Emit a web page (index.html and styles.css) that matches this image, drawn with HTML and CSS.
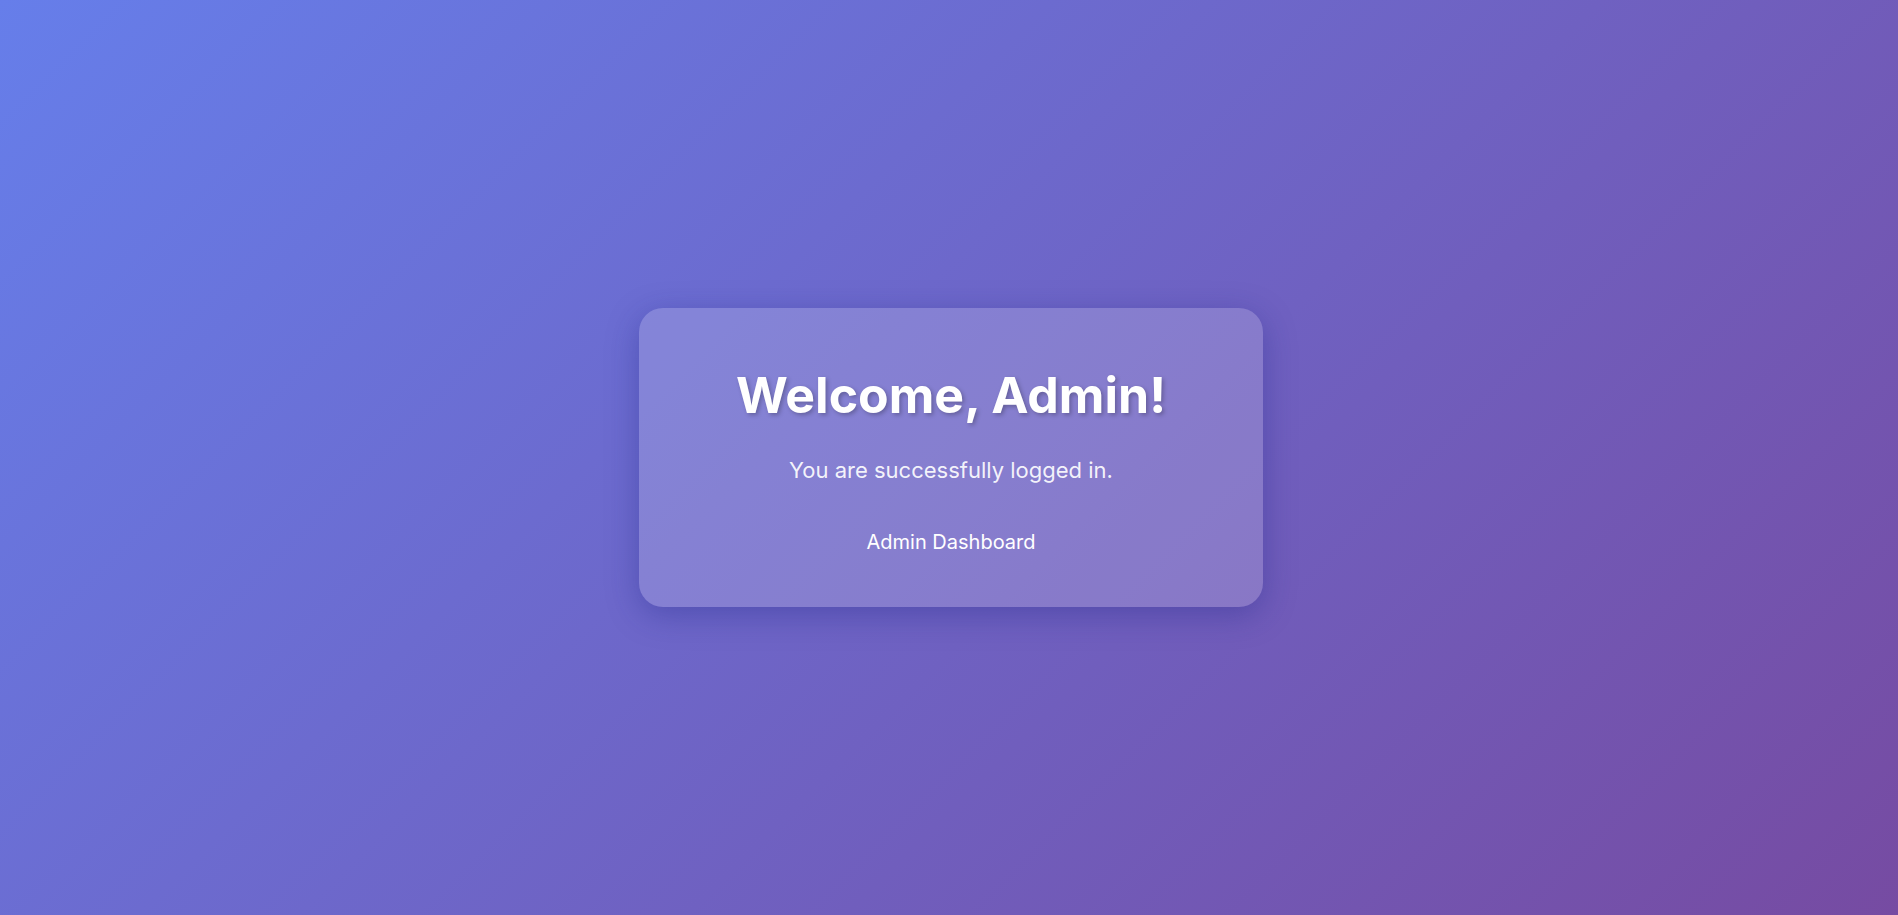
FILE: index.html
```html
<!DOCTYPE html>
<html lang="en">
<head>
<meta charset="utf-8">
<title>Welcome</title>
<link rel="stylesheet" href="styles.css">
</head>
<body>
<main class="page">
  <section class="card">
    <h1 class="title">Welcome, Admin!</h1>
    <p class="subtitle">You are successfully logged in.</p>
    <a class="link" href="#">Admin Dashboard</a>
  </section>
</main>
</body>
</html>
```
FILE: styles.css
```css
html, body {
  margin: 0;
  padding: 0;
  height: 100%;
}
body {
  font-family: Inter, "Noto Sans", sans-serif;
  background: linear-gradient(135deg, #667eea 0%, #764ba2 100%);
  color: #fff;
}
.page {
  min-height: 100vh;
  display: flex;
  align-items: center;
  justify-content: center;
  padding-left: 4px;
  box-sizing: border-box;
}
.card {
  width: 624px;
  box-sizing: border-box;
  padding: 57px 40px 52px;
  border-radius: 24px;
  background: rgba(255, 255, 255, 0.17);
  box-shadow: 0 8px 32px rgba(31, 38, 135, 0.37);
  display: flex;
  flex-direction: column;
  align-items: center;
  text-align: center;
}
.title {
  margin: 0;
  font-size: 50px;
  font-weight: 700;
  line-height: 1.2;
  text-shadow: 2px 2px 4px rgba(0, 0, 0, 0.25);
}
.subtitle {
  margin: 31px 0 0;
  font-size: 22px;
  line-height: 1.3;
  color: rgba(255, 255, 255, 0.92);
}
.link {
  margin-top: 44px;
  font-size: 20px;
  line-height: 1.3;
  color: #fff;
  text-decoration: none;
}
```
